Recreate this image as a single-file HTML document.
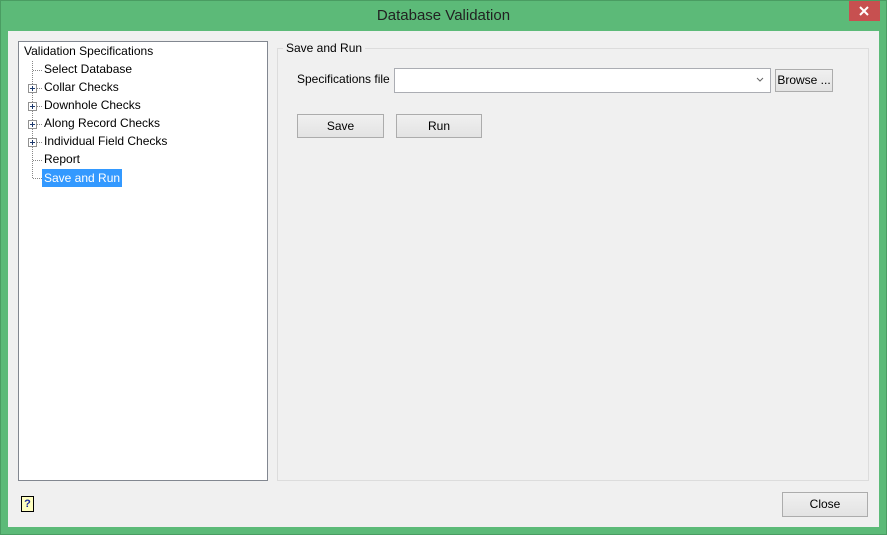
<!DOCTYPE html>
<html><head><style>
body{margin:0;width:887px;height:535px;background:#5cba78;font-family:"Liberation Sans",sans-serif;font-size:12px;position:relative;overflow:hidden}
.a{position:absolute}
.frame{left:0;top:0;width:885px;height:533px;border:1px solid #4a9c62;}
.client{left:8px;top:31px;width:871px;height:496px;background:#f0f0f0}
.btn{position:absolute;background:linear-gradient(#f0f0f0,#e3e3e3);border:1px solid #acacac;text-align:center;box-sizing:border-box;color:#000}
</style></head><body>
<div class="a frame"></div>
<div class="a" style="left:0;top:7px;width:887px;text-align:center;font-size:15px;color:#222">Database Validation</div>
<div class="a" style="left:849px;top:1px;width:31px;height:20px;background:#c75050"></div>
<div class="a client"></div>
<div class="a" style="left:18px;top:41px;width:248px;height:438px;background:#fff;border:1px solid #828790"></div>
<div class="a" style="left:394px;top:68px;width:375px;height:23px;border:1px solid #abadb3;background:#fff"></div>
<svg class="a" style="left:0;top:0" width="887" height="535">
<path d="M860 7l8 8M868 7l-8 8" stroke="#fff" stroke-width="2"/>
<g stroke="#888" stroke-dasharray="1,1" fill="none">
<line x1="32.5" y1="61" x2="32.5" y2="178"/>
<line x1="33" y1="70.5" x2="42" y2="70.5"/><line x1="33" y1="88.5" x2="42" y2="88.5"/><line x1="33" y1="106.5" x2="42" y2="106.5"/><line x1="33" y1="124.5" x2="42" y2="124.5"/><line x1="33" y1="142.5" x2="42" y2="142.5"/><line x1="33" y1="160.5" x2="42" y2="160.5"/><line x1="33" y1="178.5" x2="42" y2="178.5"/>
</g>
<g fill="#fff" stroke="#919191">
<rect x="28.5" y="84.5" width="8" height="8"/><rect x="28.5" y="102.5" width="8" height="8"/><rect x="28.5" y="120.5" width="8" height="8"/><rect x="28.5" y="138.5" width="8" height="8"/>
</g>
<g stroke="#1e3a6e"><path d="M30 88.5h5M32.5 86v5M30 106.5h5M32.5 104v5M30 124.5h5M32.5 122v5M30 142.5h5M32.5 140v5"/></g>
<rect x="277.5" y="48.5" width="591" height="432" fill="none" stroke="#dcdcdc"/>
<path d="M757 78l3 3 3-3" stroke="#666" fill="none"/>
</svg>
<div class="a" style="left:24px;top:44px">Validation Specifications</div>
<div class="a" style="left:44px;top:62px">Select Database</div>
<div class="a" style="left:44px;top:80px">Collar Checks</div>
<div class="a" style="left:44px;top:98px">Downhole Checks</div>
<div class="a" style="left:44px;top:116px">Along Record Checks</div>
<div class="a" style="left:44px;top:134px">Individual Field Checks</div>
<div class="a" style="left:44px;top:152px">Report</div>
<div class="a" style="left:42px;top:169px;background:#3399ff;color:#fff;padding:1px 2px;height:16px;line-height:16px">Save and Run</div>
<div class="a" style="left:283px;top:41px;background:#f0f0f0;padding:0 3px">Save and Run</div>
<div class="a" style="left:297px;top:72px">Specifications file</div>
<div class="btn" style="left:775px;top:69px;width:58px;height:23px;line-height:21px">Browse ...</div>
<div class="btn" style="left:297px;top:114px;width:87px;height:24px;line-height:22px">Save</div>
<div class="btn" style="left:396px;top:114px;width:86px;height:24px;line-height:22px">Run</div>
<div class="btn" style="left:782px;top:492px;width:86px;height:25px;line-height:23px">Close</div>
<div class="a" style="left:21px;top:496px;width:11px;height:14px;border:1px solid #000;background:#ffffc0;font-size:11px;font-weight:bold;color:#1c2a9c;text-align:center;line-height:14px">?</div>
</body></html>
